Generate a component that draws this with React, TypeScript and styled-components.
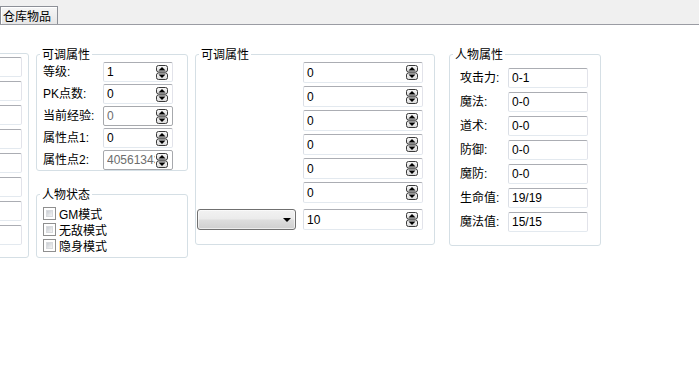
import { Fragment } from "react";
import styled, { createGlobalStyle } from "styled-components";

const GlobalStyle = createGlobalStyle`
  html, body {
    margin: 0;
    padding: 0;
    background: #fff;
  }
  body {
    font-family: "Liberation Sans", "Noto Sans CJK SC", sans-serif;
    font-size: 12px;
    color: #000;
    overflow: hidden;
  }
`;

const Page = styled.div`
  width: 699px;
  height: 376px;
  overflow: hidden;
`;

const TabBar = styled.div`
  height: 24px;
  background: #f0f0f0;
  border-bottom: 1px solid #9a9ca3;
  display: flex;
  align-items: flex-end;
`;

const Tab = styled.div`
  height: 17px;
  width: 54px;
  border: 1px solid #8d9097;
  border-bottom: none;
  box-shadow: inset 1px 1px 0 #fff;
  background: linear-gradient(#f6f6f6, #e6e6e6);
  display: flex;
  align-items: center;
  padding-left: 2px;
  font-family: "Noto Sans CJK SC", sans-serif;
  font-size: 12px;
  line-height: 12px;
`;

const Content = styled.div`
  display: flex;
  align-items: flex-start;
  gap: 7px;
  padding-top: 23px;
  margin-left: -123px;
`;

const Column = styled.div`
  display: flex;
  flex-direction: column;
  gap: 17px;
`;

const Group = styled.fieldset<{ $width: number; $top?: number; $left?: number }>`
  margin: ${(p) => p.$top ?? 0}px 0 0 ${(p) => p.$left ?? 0}px;
  padding: 0;
  width: ${(p) => p.$width}px;
  box-sizing: border-box;
  border: 1px solid #d5dfe5;
  border-radius: 3px;
  min-width: 0;
`;

const Legend = styled.legend`
  margin-left: 3px;
  padding: 0 2px;
  font-family: "Noto Sans CJK SC", sans-serif;
  font-size: 12px;
  line-height: 12px;
`;

const Rows = styled.div<{ $cols: string; $gap: number; $pad: string }>`
  display: grid;
  grid-template-columns: ${(p) => p.$cols};
  row-gap: ${(p) => p.$gap}px;
  align-items: center;
  padding: ${(p) => p.$pad};
`;

const Label = styled.span`
  font-size: 12px;
  line-height: 14px;
  white-space: nowrap;
`;

const Field = styled.div<{ $width: number; $height?: number; $disabled?: boolean }>`
  box-sizing: border-box;
  width: ${(p) => p.$width}px;
  height: ${(p) => p.$height ?? 20}px;
  border: 1px solid;
  border-color: ${(p) =>
    p.$disabled ? "#a7a9ad" : "#abadb3 #e2e3ea #e3e9ef #dbdfe6"};
  border-radius: 2px;
  background: #fff;
  display: flex;
  align-items: center;
  gap: 1px;
  padding: 0 4px 0 3px;
  color: ${(p) => (p.$disabled ? "#6d6d6d" : "#000")};
  font-size: 12px;
  overflow: hidden;
  white-space: nowrap;
`;

const Value = styled.span`
  flex: 1;
  min-width: 0;
  overflow: hidden;
  line-height: 14px;
`;

const SpinIcon = () => (
  <svg width="12" height="15" viewBox="0 0 12 15" style={{ flexShrink: 0 }}>
    <defs>
      <linearGradient id="spg" x1="0" y1="0" x2="0" y2="1">
        <stop offset="0" stopColor="#fafafa" />
        <stop offset="1" stopColor="#d8d8d8" />
      </linearGradient>
    </defs>
    <rect x="0.5" y="0.5" width="11" height="6.5" rx="2" fill="url(#spg)" stroke="#3a3a3a" />
    <rect x="0.5" y="8" width="11" height="6.5" rx="2" fill="url(#spg)" stroke="#3a3a3a" />
    <polygon points="2.5,5.5 6,2 9.5,5.5" fill="#000" />
    <polygon points="2.5,9.5 9.5,9.5 6,13" fill="#000" />
  </svg>
);

const SpinBox = ({
  value,
  width,
  height,
  disabled,
}: {
  value: string;
  width: number;
  height?: number;
  disabled?: boolean;
}) => (
  <Field $width={width} $height={height} $disabled={disabled}>
    <Value>{value}</Value>
    <SpinIcon />
  </Field>
);

const Combo = styled.div`
  box-sizing: border-box;
  width: 99px;
  height: 21px;
  margin-top: 3px;
  border: 1px solid #707070;
  border-radius: 3px;
  background: linear-gradient(#f2f2f2 0%, #ebebeb 48%, #dddddd 52%, #cfcfcf 100%);
  box-shadow: inset 0 0 0 1px rgba(255, 255, 255, 0.6);
  display: flex;
  align-items: center;
  justify-content: flex-end;
  padding-right: 4px;
`;

const Arrow = styled.span`
  width: 0;
  height: 0;
  border-left: 4px solid transparent;
  border-right: 4px solid transparent;
  border-top: 4px solid #000;
`;

const Spacer = styled.div<{ $top?: number }>`
  margin-top: ${(p) => p.$top ?? 0}px;
`;

const CheckList = styled.div`
  display: flex;
  flex-direction: column;
  padding: 5px 6px 4px 6px;
`;

const CheckRow = styled.label`
  display: flex;
  align-items: center;
  gap: 3px;
  height: 16px;
  font-size: 12px;
`;

const Check = styled.span`
  box-sizing: border-box;
  width: 13px;
  height: 13px;
  border: 1px solid #8f8f8f;
  background: #fff;
  position: relative;
  flex-shrink: 0;
  &::after {
    content: "";
    position: absolute;
    inset: 2px;
    background: linear-gradient(135deg, #c9cdd3, #f4f4f4);
    border: 1px solid #d9dbde;
    box-sizing: border-box;
  }
`;

const adjust = [
  { label: "等级:", value: "1" },
  { label: "PK点数:", value: "0" },
  { label: "当前经验:", value: "0", disabled: true },
  { label: "属性点1:", value: "0" },
  { label: "属性点2:", value: "40561343", disabled: true },
];

const stats = [
  { label: "攻击力:", value: "0-1" },
  { label: "魔法:", value: "0-0" },
  { label: "道术:", value: "0-0" },
  { label: "防御:", value: "0-0" },
  { label: "魔防:", value: "0-0" },
  { label: "生命值:", value: "19/19" },
  { label: "魔法值:", value: "15/15" },
];

export default function App() {
  return (
    <Page>
      <GlobalStyle />
      <TabBar>
        <Tab>仓库物品</Tab>
      </TabBar>
      <Content>
        {/* partly scrolled-off panel on the left */}
        <Group $width={152} $top={5}>
          <Rows $cols="80px" $gap={4} $pad="3px 7px 12px 64px">
            {Array.from({ length: 8 }).map((_, i) => (
              <Field key={i} $width={80} />
            ))}
          </Rows>
        </Group>

        <Column>
          <Group $width={152}>
            <Legend>可调属性</Legend>
            <Rows $cols="60px 70px" $gap={2} $pad="2px 14px 0 6px">
              {adjust.map((r) => (
                <Fragment key={r.label}>
                  <Label>{r.label}</Label>
                  <SpinBox value={r.value} width={70} disabled={r.disabled} />
                </Fragment>
              ))}
            </Rows>
          </Group>
          <Group $width={152}>
            <Legend>人物状态</Legend>
            <CheckList>
              {["GM模式", "无敌模式", "隐身模式"].map((t) => (
                <CheckRow key={t}>
                  <Check />
                  {t}
                </CheckRow>
              ))}
            </CheckList>
          </Group>
        </Column>

        <Group $width={240}>
          <Legend>可调属性</Legend>
          <Rows $cols="106px 120px" $gap={3} $pad="2px 12px 14px 1px">
            {Array.from({ length: 6 }).map((_, i) => (
              <Fragment key={i}>
                <Spacer />
                <SpinBox value="0" width={120} height={21} />
              </Fragment>
            ))}
            <Combo>
              <Arrow />
            </Combo>
            <Spacer $top={3}>
              <SpinBox value="10" width={120} height={21} />
            </Spacer>
          </Rows>
        </Group>

        <Group $width={152} $left={7}>
          <Legend>人物属性</Legend>
          <Rows $cols="48px 80px" $gap={4} $pad="8px 11px 13px 10px">
            {stats.map((s) => (
              <Fragment key={s.label}>
                <Label>{s.label}</Label>
                <Field $width={80}>
                  <Value>{s.value}</Value>
                </Field>
              </Fragment>
            ))}
          </Rows>
        </Group>
      </Content>
    </Page>
  );
}
